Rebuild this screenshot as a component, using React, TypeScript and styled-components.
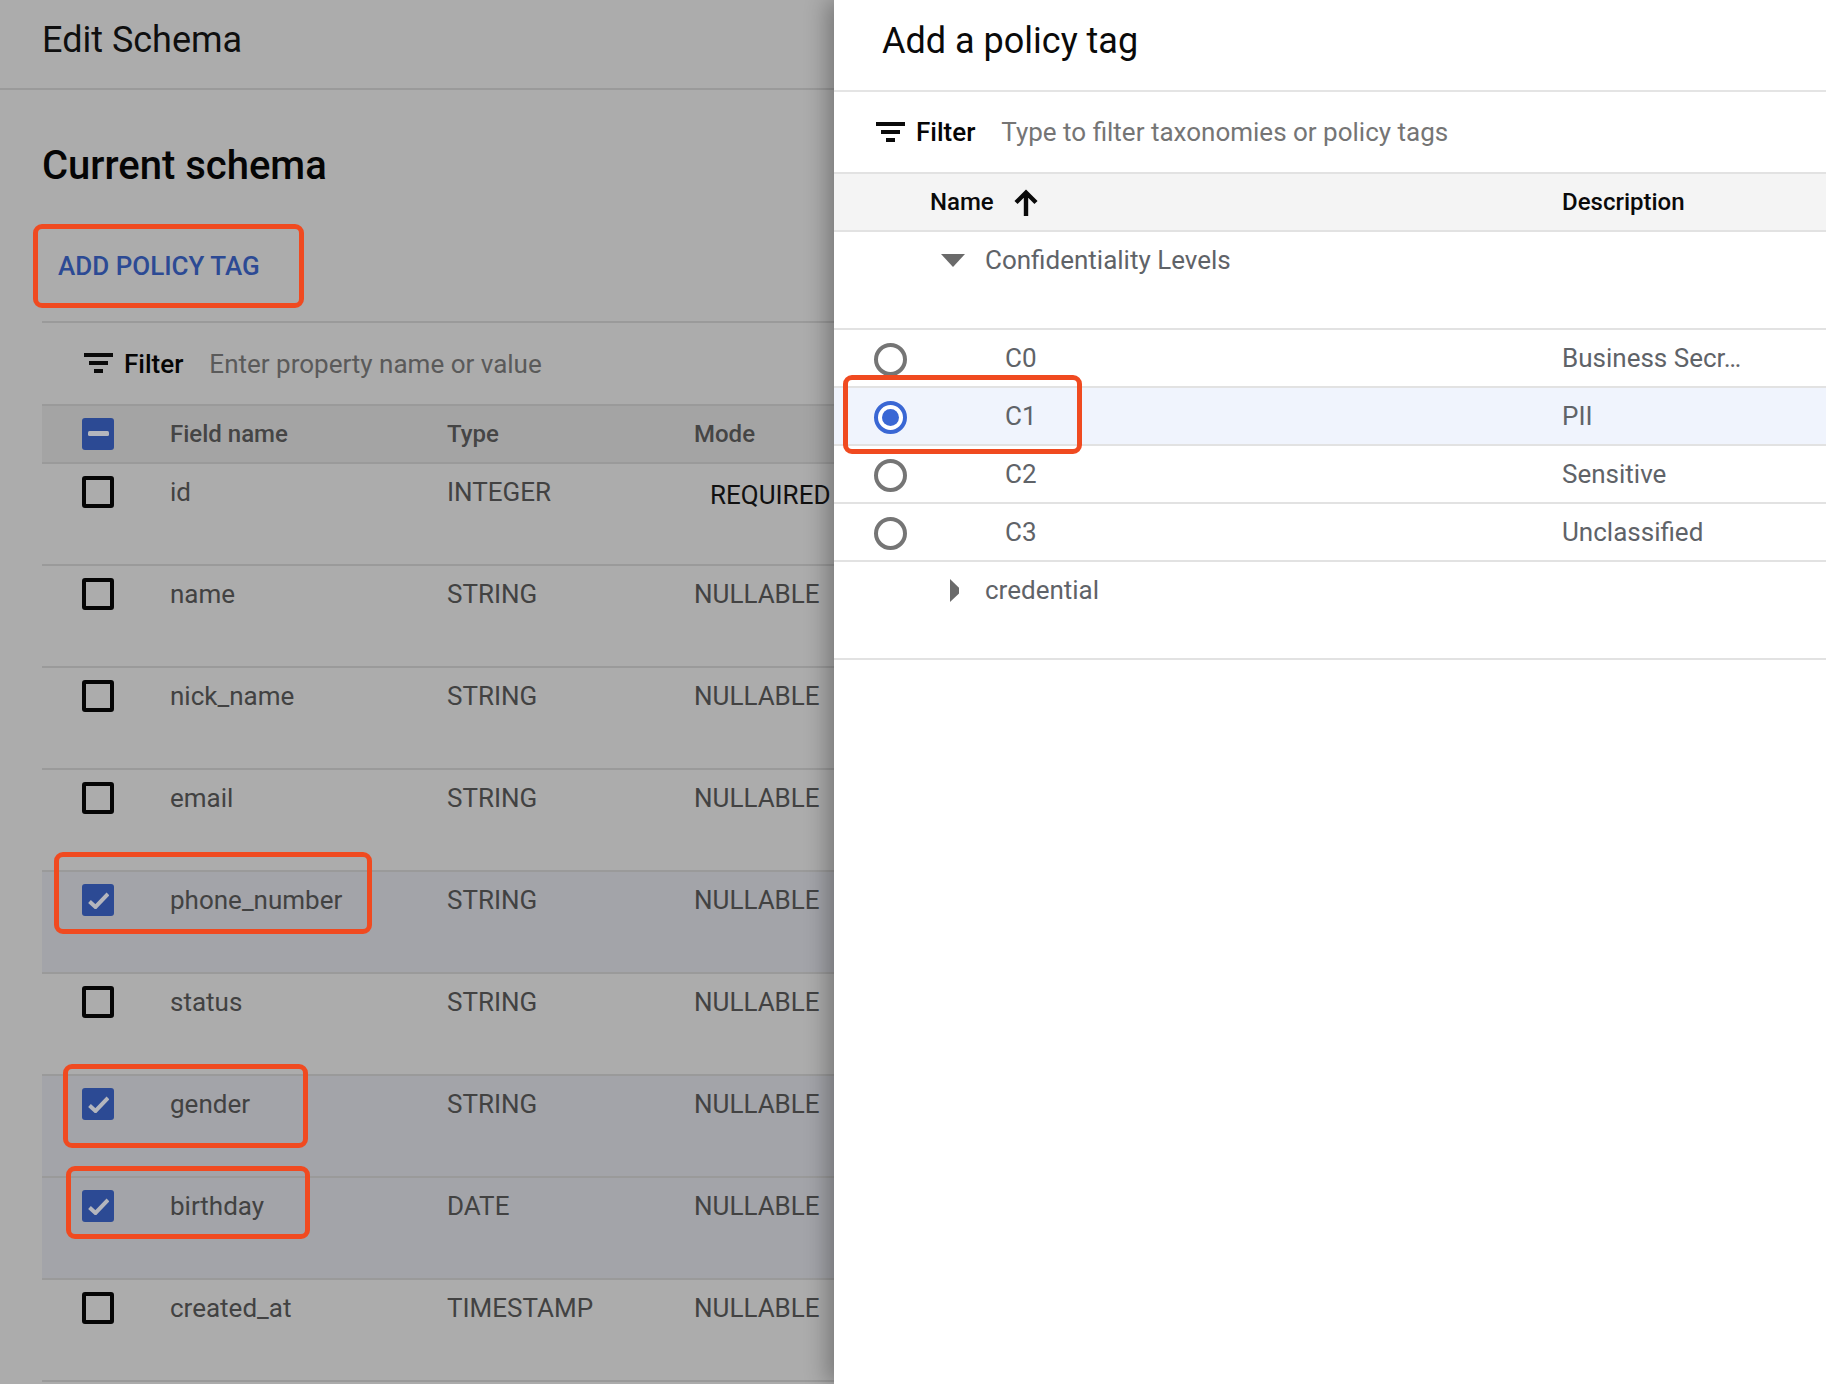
import React from 'react'
import styled, { createGlobalStyle } from 'styled-components'

const Global = createGlobalStyle`
  html, body {
    margin: 0;
    padding: 0;
    background: #fff;
    font-family: Roboto, "Liberation Sans", sans-serif;
  }
`

// page + the two panels
const Page = styled.div`
  position: relative;
  display: flex;
  width: 1826px;
  height: 1384px;
  overflow: hidden;
`

const SchemaPanel = styled.section`
  width: 834px;
  flex: none;
  background: #acacac;
`

const TagPanel = styled.section`
  flex: 1;
  background: #fff;
  box-shadow: -6px 0 22px rgba(0, 0, 0, 0.32);
  z-index: 1;
`

const SchemaHeader = styled.header`
  display: flex;
  align-items: center;
  height: 90px;
  padding: 0 0 8px 42px;
  box-sizing: border-box;
  border-bottom: 2px solid #9a9a9a;
  font-size: 36px;
  color: #0f0f0f;
`

const SchemaBody = styled.div`
  padding-left: 42px;
`

const Title = styled.h2`
  margin: 0;
  padding-top: 50px;
  height: 69px;
  font-size: 40px;
  line-height: 52px;
  font-weight: 500;
  color: #050505;
`

const ActionRow = styled.div`
  height: 114px;
  padding-top: 40px;
  box-sizing: border-box;
  border-bottom: 2px solid #9a9a9a;
`

const ActionLink = styled.a`
  display: block;
  margin-left: 16px;
  font-size: 26px;
  line-height: 34px;
  font-weight: 500;
  color: #2c4a94;
`

const FilterBar = styled.div<{ $inset: number; $height: number; $line: string }>`
  display: flex;
  align-items: center;
  height: ${p => p.$height}px;
  padding-left: ${p => p.$inset}px;
  box-sizing: border-box;
  border-bottom: 2px solid ${p => p.$line};
`

const FilterLabel = styled.span`
  margin-left: 11px;
  font-size: 26px;
  font-weight: 500;
  color: #050505;
`

const FilterHint = styled.span<{ $color: string }>`
  margin-left: 26px;
  font-size: 26px;
  color: ${p => p.$color};
`

// schema table
const SchemaHead = styled.div`
  display: grid;
  grid-template-columns: 128px 277px 247px 1fr;
  align-items: center;
  height: 58px;
  box-sizing: border-box;
  background: #a4a4a4;
  border-bottom: 2px solid #9a9a9a;
  font-size: 24px;
  font-weight: 500;
  color: #454545;
`

const SchemaRow = styled.div<{ $selected?: boolean }>`
  display: grid;
  grid-template-columns: 128px 277px 247px 1fr;
  align-items: start;
  height: 102px;
  padding-top: 12px;
  box-sizing: border-box;
  background: ${p => (p.$selected ? '#a3a4a9' : 'transparent')};
  border-bottom: 2px solid #9a9a9a;
  font-size: 26px;
  line-height: 32px;
  color: #424242;
`

const CheckCell = styled.div`
  padding-left: 40px;
  display: flex;
`

const Check = styled.span<{ $on?: boolean }>`
  display: flex;
  align-items: center;
  justify-content: center;
  width: 32px;
  height: 32px;
  box-sizing: border-box;
  border-radius: 3px;
  background: ${p => (p.$on ? '#2c4a94' : 'transparent')};
  border: ${p => (p.$on ? 'none' : '4px solid #050505')};
`

const ModeText = styled.span<{ $required?: boolean }>`
  ${p => (p.$required ? 'margin: 3px 0 0 16px; color: #111;' : '')}
  white-space: nowrap;
`

// tag table
const TagHeader = styled.header`
  display: flex;
  align-items: center;
  height: 92px;
  padding: 0 0 8px 48px;
  box-sizing: border-box;
  border-bottom: 2px solid #e4e4e4;
  font-size: 36px;
  color: #0a0a0a;
`

const TagHead = styled.div`
  display: grid;
  grid-template-columns: 728px 1fr;
  align-items: center;
  height: 58px;
  box-sizing: border-box;
  background: #f4f4f4;
  border-bottom: 2px solid #e2e2e2;
  font-size: 24px;
  font-weight: 500;
  color: #0a0a0a;
`

const NameHead = styled.div`
  display: flex;
  align-items: center;
  padding-left: 96px;
  gap: 20px;
`

const GroupRow = styled.div`
  display: flex;
  align-items: flex-start;
  height: 98px;
  padding: 11px 0 0 106px;
  box-sizing: border-box;
  border-bottom: 2px solid #e2e2e2;
  font-size: 26px;
  line-height: 34px;
  color: #5f6368;
`

const Caret = styled.span`
  display: flex;
  align-items: center;
  justify-content: center;
  width: 26px;
  height: 34px;
  margin-right: 19px;
`

const TagRow = styled.div<{ $selected?: boolean }>`
  display: grid;
  grid-template-columns: 171px 557px 1fr;
  align-items: center;
  height: 58px;
  box-sizing: border-box;
  background: ${p => (p.$selected ? '#f0f4fd' : '#fff')};
  border-bottom: 2px solid #e2e2e2;
  font-size: 26px;
  color: #5f6368;
  white-space: nowrap;
`

const RadioCell = styled.div`
  padding-left: 40px;
  display: flex;
`

const Radio = styled.span<{ $on?: boolean }>`
  display: flex;
  align-items: center;
  justify-content: center;
  width: 33px;
  height: 33px;
  box-sizing: border-box;
  border-radius: 50%;
  border: 4px solid ${p => (p.$on ? '#3a67d4' : '#757575')};
  background: #fff;
  margin-top: 2px;
  &::after {
    content: '';
    display: ${p => (p.$on ? 'block' : 'none')};
    width: 17px;
    height: 17px;
    border-radius: 50%;
    background: #3a67d4;
  }
`

// orange annotation boxes drawn over the screenshot
const Marker = styled.div<{ $x: number; $y: number; $w: number; $h: number }>`
  position: absolute;
  left: ${p => p.$x}px;
  top: ${p => p.$y}px;
  width: ${p => p.$w}px;
  height: ${p => p.$h}px;
  box-sizing: border-box;
  border: 5px solid #f04a20;
  border-radius: 9px;
  z-index: 2;
`

const FilterIcon = () => (
  <svg width="29" height="21" viewBox="0 0 29 21">
    <rect x="0" y="0" width="29" height="4" fill="#0a0a0a" />
    <rect x="5" y="8" width="19" height="4" fill="#0a0a0a" />
    <rect x="10" y="16" width="9" height="4" fill="#0a0a0a" />
  </svg>
)

const CheckMark = () => (
  <svg width="21" height="17" viewBox="0 0 21 17">
    <path d="M1.5 9.5 L7.5 15 L20 2" fill="none" stroke="#b4b6bd" strokeWidth="4" />
  </svg>
)

const MinusMark = () => (
  <svg width="21" height="6" viewBox="0 0 21 6">
    <rect x="0" y="0" width="21" height="5" rx="1.5" fill="#b4b6bd" />
  </svg>
)

const ArrowUp = () => (
  <svg width="24" height="27" viewBox="0 0 24 27">
    <path d="M12 27V4M2 13.5L12 3.5L22 13.5" fill="none" stroke="#0a0a0a" strokeWidth="4.4" />
  </svg>
)

const fields = [
  { name: 'id', type: 'INTEGER', mode: 'REQUIRED', required: true },
  { name: 'name', type: 'STRING', mode: 'NULLABLE' },
  { name: 'nick_name', type: 'STRING', mode: 'NULLABLE' },
  { name: 'email', type: 'STRING', mode: 'NULLABLE' },
  { name: 'phone_number', type: 'STRING', mode: 'NULLABLE', selected: true },
  { name: 'status', type: 'STRING', mode: 'NULLABLE' },
  { name: 'gender', type: 'STRING', mode: 'NULLABLE', selected: true },
  { name: 'birthday', type: 'DATE', mode: 'NULLABLE', selected: true },
  { name: 'created_at', type: 'TIMESTAMP', mode: 'NULLABLE' },
]

const tags = [
  { name: 'C0', desc: 'Business Secr…' },
  { name: 'C1', desc: 'PII', selected: true },
  { name: 'C2', desc: 'Sensitive' },
  { name: 'C3', desc: 'Unclassified' },
]

const markers = [
  { x: 33, y: 224, w: 271, h: 84 },
  { x: 54, y: 852, w: 318, h: 82 },
  { x: 63, y: 1064, w: 245, h: 84 },
  { x: 66, y: 1166, w: 244, h: 73 },
  { x: 843, y: 375, w: 239, h: 79 },
]

export default function App() {
  return (
    <Page>
      <Global />
      <SchemaPanel>
        <SchemaHeader>Edit Schema</SchemaHeader>
        <SchemaBody>
          <Title>Current schema</Title>
          <ActionRow>
            <ActionLink>ADD POLICY TAG</ActionLink>
          </ActionRow>
          <FilterBar $inset={42} $height={83} $line="#9a9a9a">
            <FilterIcon />
            <FilterLabel>Filter</FilterLabel>
            <FilterHint $color="#5a5a5a">Enter property name or value</FilterHint>
          </FilterBar>
          <SchemaHead>
            <CheckCell>
              <Check $on>
                <MinusMark />
              </Check>
            </CheckCell>
            <span>Field name</span>
            <span>Type</span>
            <span>Mode</span>
          </SchemaHead>
          {fields.map(f => (
            <SchemaRow key={f.name} $selected={f.selected}>
              <CheckCell>
                <Check $on={f.selected}>{f.selected && <CheckMark />}</Check>
              </CheckCell>
              <span>{f.name}</span>
              <span>{f.type}</span>
              <ModeText $required={f.required}>{f.mode}</ModeText>
            </SchemaRow>
          ))}
        </SchemaBody>
      </SchemaPanel>

      <TagPanel>
        <TagHeader>Add a policy tag</TagHeader>
        <FilterBar $inset={42} $height={82} $line="#e2e2e2">
          <FilterIcon />
          <FilterLabel>Filter</FilterLabel>
          <FilterHint $color="#757575">Type to filter taxonomies or policy tags</FilterHint>
        </FilterBar>
        <TagHead>
          <NameHead>
            <span>Name</span>
            <ArrowUp />
          </NameHead>
          <span>Description</span>
        </TagHead>
        <GroupRow>
          <Caret>
            <svg width="24" height="13" viewBox="0 0 24 13">
              <path d="M0 0h24L12 13z" fill="#6a6a6a" />
            </svg>
          </Caret>
          Confidentiality Levels
        </GroupRow>
        {tags.map(t => (
          <TagRow key={t.name} $selected={t.selected}>
            <RadioCell>
              <Radio $on={t.selected} />
            </RadioCell>
            <span>{t.name}</span>
            <span>{t.desc}</span>
          </TagRow>
        ))}
        <GroupRow>
          <Caret>
            <svg width="12" height="23" viewBox="-3 0 12 23">
              <path d="M0 0l12 11.5L0 23z" fill="#6a6a6a" />
            </svg>
          </Caret>
          credential
        </GroupRow>
      </TagPanel>

      {markers.map(m => (
        <Marker key={m.y} $x={m.x} $y={m.y} $w={m.w} $h={m.h} />
      ))}
    </Page>
  )
}
